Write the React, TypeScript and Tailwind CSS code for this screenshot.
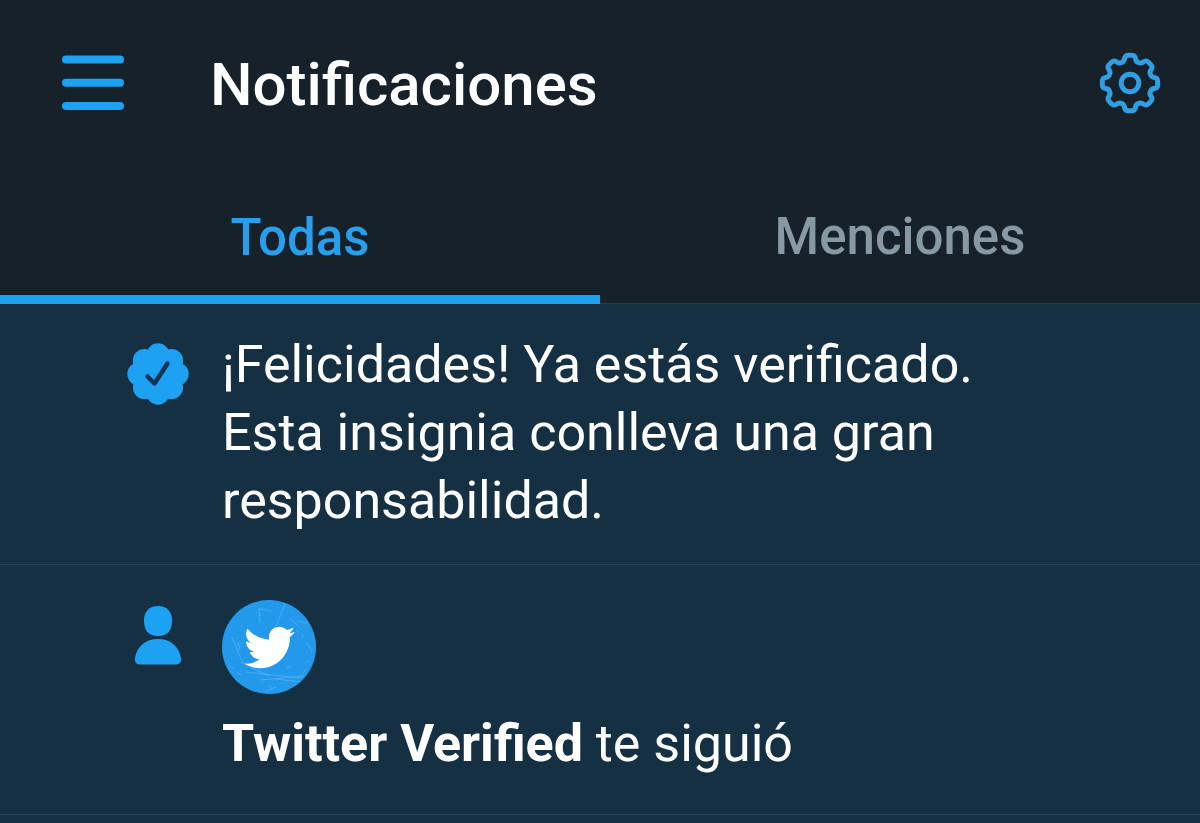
import { FaTwitter } from "react-icons/fa";

function point(x: number, y: number, turn: number) {
  const a = (turn * Math.PI) / 4;
  const px = x * Math.cos(a) - y * Math.sin(a);
  const py = x * Math.sin(a) + y * Math.cos(a);
  return `${px.toFixed(2)} ${py.toFixed(2)}`;
}

// One tooth of the cog, repeated eight times around the centre.
const cogPath =
  `M${point(0, -27.7, 0)}` +
  Array.from({ length: 8 }, (_, i) =>
    `L${point(1.5, -27.7, i)}` +
    `C${point(8, -27.7, i)} ${point(3.2, -21.7, i)} ${point(8.5, -20.5, i)}` +
    `C${point(-3.2, -21.7, i + 1)} ${point(-8, -27.7, i + 1)} ${point(-1.5, -27.7, i + 1)}`
  ).join("") +
  "Z";

function MenuIcon() {
  return (
    <svg viewBox="0 0 64 56" className="h-14 w-16" fill="none" stroke="currentColor" strokeWidth="8" strokeLinecap="round" aria-hidden="true">
      <path d="M5 4.500h54M5 27.700h54M5 51h54" />
    </svg>
  );
}

function CogIcon() {
  return (
    <svg viewBox="-32 -32 64 64" className="size-16" fill="none" stroke="currentColor" strokeWidth="5" aria-hidden="true">
      <path d={cogPath} strokeLinejoin="round" />
      <circle r="8.800" />
    </svg>
  );
}

function VerifiedIcon() {
  return (
    <svg viewBox="-32 -32 64 64" className="size-16" aria-hidden="true">
      <g fill="#1da1f2">
        <circle r="23" />
        {Array.from({ length: 8 }, (_, i) => (
          <circle key={i} r="11.500" cy="-19.200" transform={`rotate(${i * 45})`} />
        ))}
      </g>
      <path d="M-10.500 2.500l7 7L9.500-10.500" fill="none" stroke="#143350" strokeWidth="4.500" strokeLinecap="round" strokeLinejoin="round" />
    </svg>
  );
}

function PersonIcon() {
  return (
    <svg viewBox="0 0 48 60" className="h-15 w-12" fill="#1da1f2" aria-hidden="true">
      <path d="M24 1C15 1 10 7 10 15c0 9 3 16 14 16s14-7 14-16C38 7 33 1 24 1Z" />
      <path d="M24 34C12 34 3 41 1 53c-.8 4 1.500 6.500 5 6.500h36c3.500 0 5.800-2.500 5-6.500C45 41 36 34 24 34Z" />
    </svg>
  );
}

function Avatar() {
  return (
    <span className="relative flex size-[94px] items-center justify-center overflow-hidden rounded-full bg-[#2499ec] text-white">
      <svg viewBox="0 0 94 94" className="absolute inset-0 size-full" fill="none" stroke="#63b9f5" strokeWidth="1" opacity="0.600" aria-hidden="true">
        <path d="M63 4l-9 22M36 9l14 2M37 8l1 15M10 37l11 27M68 19l9 7M75 21l10 2M24 72l54 6M39 80l43-4M53 79l28 3M76 79l9-11M7 66l4 2M44 91l10-4M47 85l4 6M85 43l5 9M30 68l17 8" />
        <path d="M74 30l3 2M80 34l1 4M69 12l2 1M16 42l2 8M15 73l4 1M84 62l3-1M64 68l5-2" />
      </svg>
      <FaTwitter className="relative size-[51px]" aria-hidden="true" />
    </span>
  );
}

export default function App() {
  return (
    <div className="flex min-h-screen flex-col bg-[#153042] font-['Roboto',sans-serif] text-white">
      <header className="border-b border-[#2b3e4c] bg-[#16212a]">
        <div className="flex h-[168px] items-center justify-between pr-[38px] pb-0.5 pl-[61px]">
          <div className="flex items-center gap-[85px]">
            <button type="button" aria-label="Menú" className="text-[#1da1f2]">
              <MenuIcon />
            </button>
            <h1 className="pt-1 text-[60px] leading-[68px] font-medium">Notificaciones</h1>
          </div>
          <button type="button" aria-label="Configuración" className="text-[#309ee3]">
            <CogIcon />
          </button>
        </div>
        <nav className="grid grid-cols-2 text-[51px] leading-[60px] font-medium">
          <a href="#todas" aria-current="page" className="-mb-px flex h-[136px] items-center justify-center border-b-9 border-[#1da1f2] pt-3 text-[#269fec]">
            Todas
          </a>
          <a href="#menciones" className="flex h-[135px] items-center justify-center pt-[3px] text-[#8899a6]">
            Menciones
          </a>
        </nav>
      </header>
      <main className="text-[52px] leading-[68px]">
        <article className="flex gap-8 border-b border-[#2b4154] pt-[27px] pb-[29px] pl-[126px]">
          <div className="shrink-0 pt-[11px]">
            <VerifiedIcon />
          </div>
          <p className="max-w-[800px]">
            ¡Felicidades! Ya estás verificado. Esta insignia conlleva una gran responsabilidad.
          </p>
        </article>
        <article className="flex gap-10 border-b border-[#2b4154] py-[35px] pl-[134px]">
          <div className="shrink-0 pt-[5px]">
            <PersonIcon />
          </div>
          <div className="flex flex-col gap-4">
            <Avatar />
            <p className="pb-px">
              <strong className="font-bold">Twitter Verified</strong> te siguió
            </p>
          </div>
        </article>
      </main>
    </div>
  );
}
